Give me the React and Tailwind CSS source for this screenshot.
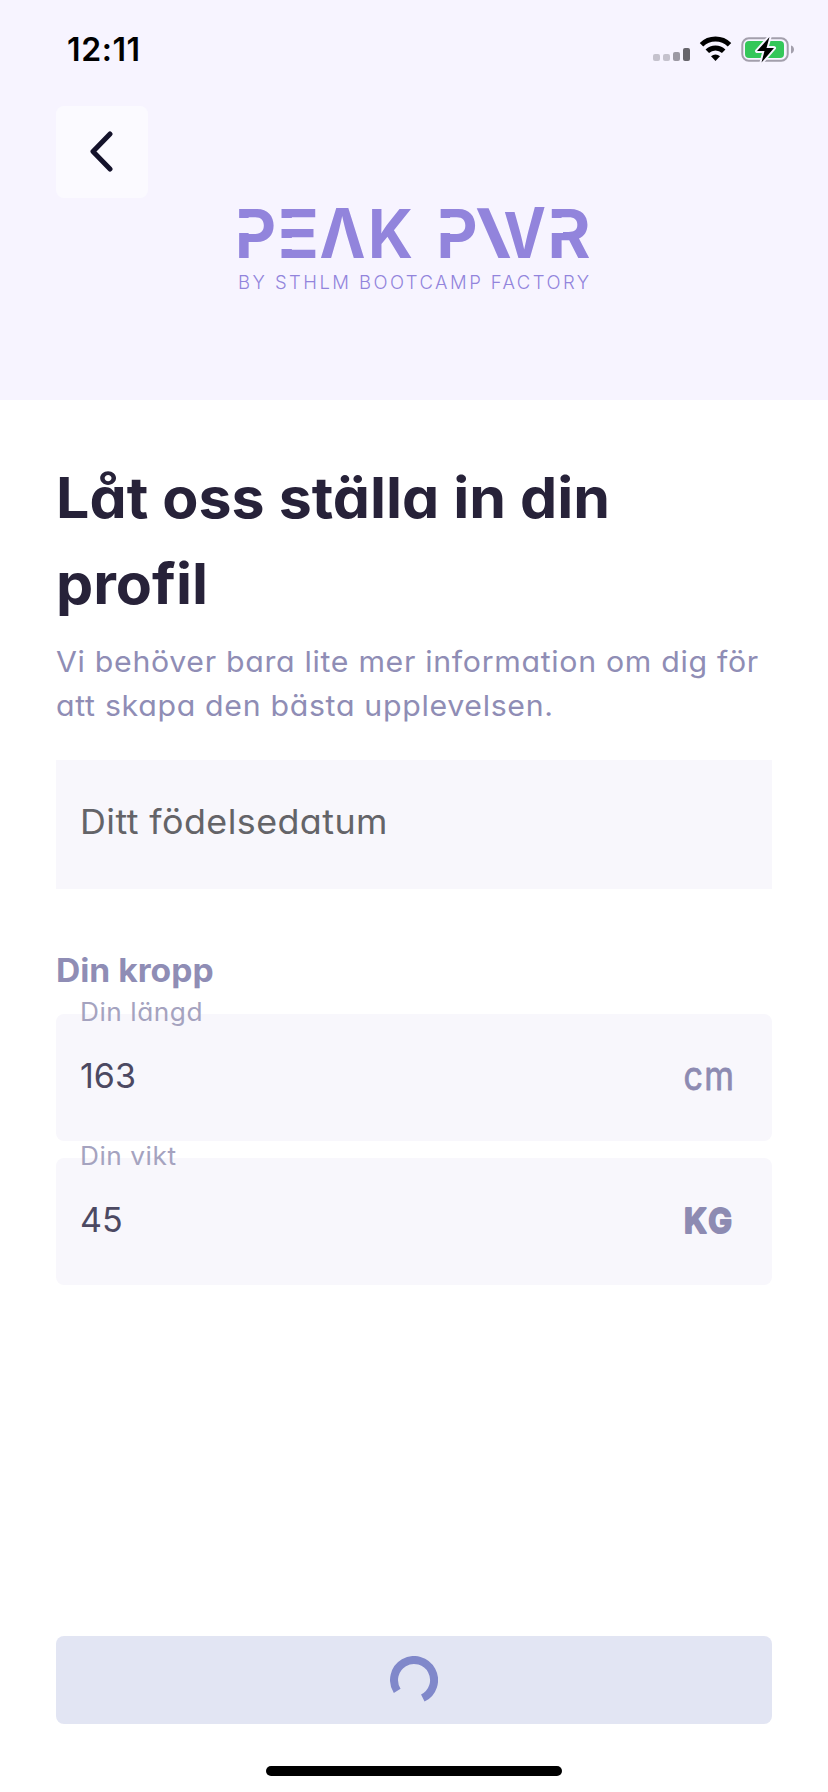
import { useState } from 'react';

const StatusBar = () => (
  <div className="flex h-[100px] items-center justify-between pl-[67px] pr-[33px]">
    <span className="text-[32px] font-semibold leading-none tracking-[0.6px] text-black">12:11</span>
    <svg className="mt-[2px]" width="142" height="32" viewBox="0 0 142 32">
      <rect x="0" y="19" width="7" height="7" rx="2" fill="#c5c2cd" />
      <rect x="10" y="19" width="7" height="7" rx="2" fill="#c5c2cd" />
      <rect x="20" y="17" width="7" height="9" rx="2" fill="#9c99a3" />
      <rect x="30" y="13" width="7" height="13" rx="2" fill="#67656c" />
      <g fill="none" stroke="#000" strokeWidth="5">
        <path d="M48.5 9.8a20 20 0 0 1 28 0" />
        <path d="M54.3 16.2a11.8 11.8 0 0 1 16.4 0" />
      </g>
      <path d="M58 21.2a7 7 0 0 1 9 0l-4.5 4.9z" fill="#000" />
      <rect x="89.3" y="3.3" width="45.4" height="22.4" rx="6.5" fill="none" stroke="#a39fac" strokeWidth="2" />
      <rect x="92" y="6" width="39" height="17" rx="4" fill="#34c759" />
      <path d="M138 10.5c4 1 4 7 0 8z" fill="#a39fac" />
      <path
        d="M116.5 2L104 16h7.5l-3 11.5L121 13h-7.5z"
        fill="#000"
        stroke="#f7f4ff"
        strokeWidth="4"
        strokeLinejoin="round"
        paintOrder="stroke"
      />
    </svg>
  </div>
);

const Logo = () => (
  <svg width="380" height="130" viewBox="224 180 380 130" role="img" aria-label="PEAK PWR">
    <g fill="#9284dc" fontFamily="Inter, sans-serif" fontWeight="700" fontSize="67.5">
      <text x="235" y="258" textLength="41" lengthAdjust="spacingAndGlyphs">P</text>
      <text x="277" y="258" textLength="42" lengthAdjust="spacingAndGlyphs">E</text>
      <text x="319.5" y="258" fontSize="69" textLength="46" lengthAdjust="spacingAndGlyphs">Λ</text>
      <text x="368" y="258" textLength="45" lengthAdjust="spacingAndGlyphs">K</text>
      <text x="436.5" y="258" textLength="41" lengthAdjust="spacingAndGlyphs">P</text>
      <text x="475.5" y="251.5" fontSize="57" textLength="36" lengthAdjust="spacingAndGlyphs">\</text>
      <text x="502" y="258" fontSize="69.5" textLength="44" lengthAdjust="spacingAndGlyphs">V</text>
      <text x="547.5" y="258" textLength="43" lengthAdjust="spacingAndGlyphs">R</text>
    </g>
    {/* stencil cuts */}
    <g fill="#f7f4ff">
      <rect x="236" y="218" width="15" height="15" />
      <rect x="278" y="218" width="15" height="11" />
      <rect x="278" y="238" width="15" height="11" />
      <rect x="437" y="218" width="15" height="15" />
      <rect x="500" y="204" width="19" height="8" />
      <rect x="548" y="218" width="15" height="15" />
    </g>
    <text
      x="238"
      y="288.5"
      fill="#9284dc"
      fontFamily="Inter, sans-serif"
      fontWeight="300"
      fontSize="18.5"
      textLength="351"
    >
      BY STHLM BOOTCAMP FACTORY
    </text>
  </svg>
);

const Unit = ({ label, bold }) => (
  <svg width="52" height="48" viewBox="0 0 52 48">
    <text
      x={bold ? '0.5 26.5' : '0.5 24.5'}
      y={bold ? 35.5 : 35.5}
      fontFamily="Inter, sans-serif"
      fontWeight={bold ? 700 : 400}
      fontSize={bold ? 34 : 39}
      fill="#8d8bb2"
      stroke="#8d8bb2"
      strokeWidth={bold ? 2 : 0.8}
      strokeLinejoin="round"
      transform={bold ? 'translate(1.5 0) scale(0.93 1)' : 'translate(1 0) scale(0.87 1)'}
    >
      {label}
    </text>
  </svg>
);

const Field = ({ label, value, onChange, unit, bold }) => (
  <div className="relative flex h-[127px] items-center justify-between rounded-lg bg-[#f8f7fc] pl-6 pr-[38px]">
    <label className="absolute left-6 top-[-17px] origin-left scale-x-105 text-[25px] leading-[30px] tracking-[0.5px] text-[#a5a3bf]">
      {label}
    </label>
    <input
      className="mb-1 w-[300px] bg-transparent text-[34px] leading-[44px] text-[#4c4962] outline-none"
      value={value}
      onChange={(e) => onChange(e.target.value)}
    />
    <Unit label={unit} bold={bold} />
  </div>
);

const Spinner = () => (
  <svg width="48" height="48" viewBox="0 0 48 48" fill="none">
    <path d="M7.2 34.8A20 20 0 1 1 32.8 42" stroke="#8088ca" strokeWidth="8" />
  </svg>
);

const App = () => {
  const [height, setHeight] = useState('163');
  const [weight, setWeight] = useState('45');

  return (
    <div className="flex h-[1792px] w-[828px] flex-col bg-white font-[Inter,sans-serif] [font-feature-settings:'cv11']">
      <header className="h-[400px] bg-[#f7f4ff]">
        <StatusBar />
        <div className="px-14 pt-[6px]">
          <button className="flex h-[92px] w-[92px] items-center justify-center rounded-lg bg-[#fbfaff]">
            <svg width="24" height="42" viewBox="0 0 24 42" fill="none">
              <path d="M20 3L3 20.5L20 38" stroke="#14122b" strokeWidth="5" strokeLinecap="round" strokeLinejoin="round" />
            </svg>
          </button>
        </div>
        <div className="-mt-[18px] flex justify-center">
          <Logo />
        </div>
      </header>

      <main className="flex flex-1 flex-col px-14">
        <h1 className="mt-[55px] origin-left scale-x-[1.055] text-[56px] font-bold leading-[86px] text-[#272239]">
          Låt oss ställa in din
          <br />
          profil
        </h1>
        <p className="mt-[13px] origin-left scale-x-[1.045] whitespace-nowrap text-[29px] leading-[44px] tracking-[0.65px] text-[#8f8db5]">
          Vi behöver bara lite mer information om dig för
          <br />
          att skapa den bästa upplevelsen.
        </p>

        <div className="mt-8 flex h-[129px] items-center bg-[#f8f7fc] px-6 pb-[6px] text-[34px] leading-[44px] tracking-[0.4px] text-[#646468]">
          <span className="origin-left scale-x-[1.055]">Ditt födelsedatum</span>
        </div>

        <h2 className="mt-[62px] origin-left scale-x-105 text-[32px] font-bold leading-[40px] text-[#8f8db5]">
          Din kropp
        </h2>
        <div className="mt-[23px] flex flex-col gap-[17px]">
          <Field label="Din längd" value={height} onChange={setHeight} unit="cm" />
          <Field label="Din vikt" value={weight} onChange={setWeight} unit="KG" bold />
        </div>

        <button className="mt-auto flex h-[88px] items-center justify-center rounded-lg bg-[#e2e5f3]">
          <Spinner />
        </button>
      </main>

      <footer className="flex h-[68px] items-end justify-center pb-4">
        <div className="h-[10px] w-[296px] rounded-full bg-black" />
      </footer>
    </div>
  );
};

export default App;
